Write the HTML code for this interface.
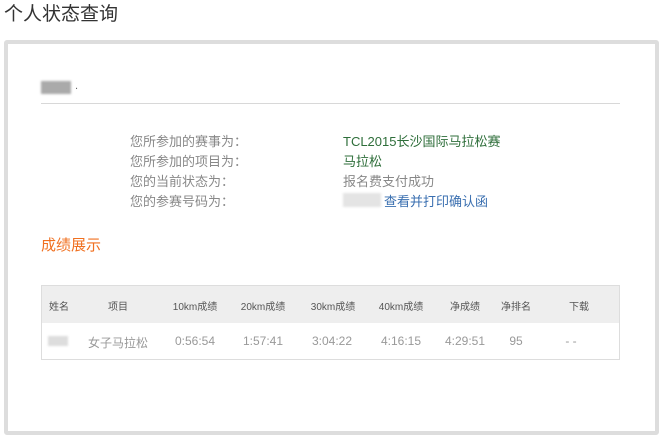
<!DOCTYPE html>
<html><head><meta charset="utf-8"><style>
*{margin:0;padding:0;box-sizing:border-box}
body{width:660px;height:437px;background:#fff;font-family:"Liberation Sans","Noto Sans CJK SC",sans-serif;position:relative;overflow:hidden}
.t{position:absolute;left:4px;top:-1px;font-size:19px;color:#333}
.box{position:absolute;left:4px;top:40px;width:655px;height:395px;border:4px solid #ddd;border-radius:3px;background:#fff}
.abs{position:absolute}
.blur{position:absolute;background:#c8c8c8;filter:blur(1px)}
.hr{position:absolute;left:41px;top:103px;width:579px;height:1px;background:#d8d8d8}
.lab{position:absolute;left:130px;font-size:13px;color:#888}
.val{position:absolute;left:343px;font-size:13px}
.sec{position:absolute;left:41px;top:234px;font-size:15px;color:#f07020}
.tbl{position:absolute;left:41px;top:285px;width:579px;height:75px;border:1px solid #ddd}
.hd{height:37px;background:#eee}
.c{position:absolute;font-size:10px;color:#555;transform:translateX(-50%)}
.d{position:absolute;font-size:12px;color:#999;transform:translateX(-50%)}
</style></head><body>
<div class="t">个人状态查询</div>
<div class="box"></div>
<div class="blur" style="left:41px;top:81px;width:30px;height:13px;background:#aaa"></div>
<div class="abs" style="left:75px;top:80px;font-size:11px;color:#666">.</div>
<div class="hr"></div>
<div class="lab" style="top:131px">您所参加的赛事为：</div>
<div class="lab" style="top:151px">您所参加的项目为：</div>
<div class="lab" style="top:171px">您的当前状态为：</div>
<div class="lab" style="top:191px">您的参赛号码为：</div>
<div class="val" style="top:131px;color:#2e6e3a">TCL2015长沙国际马拉松赛</div>
<div class="val" style="top:151px;color:#2e6e3a">马拉松</div>
<div class="val" style="top:171px;color:#888">报名费支付成功</div>
<div class="blur" style="left:343px;top:193px;width:38px;height:14px;background:#e4e4e4"></div>
<div class="val" style="top:191px;left:384px;color:#3a6fb0">查看并打印确认函</div>
<div class="sec">成绩展示</div>
<div class="tbl"><div class="hd"></div></div>
<div class="c" style="left:59px;top:298px">姓名</div>
<div class="c" style="left:118px;top:298px">项目</div>
<div class="c" style="left:195px;top:298px">10km成绩</div>
<div class="c" style="left:263px;top:298px">20km成绩</div>
<div class="c" style="left:333px;top:298px">30km成绩</div>
<div class="c" style="left:401px;top:298px">40km成绩</div>
<div class="c" style="left:465px;top:298px">净成绩</div>
<div class="c" style="left:516px;top:298px">净排名</div>
<div class="c" style="left:579px;top:298px">下载</div>
<div class="blur" style="left:48px;top:336px;width:20px;height:10px;background:#ddd"></div>
<div class="d" style="left:118px;top:334px">女子马拉松</div>
<div class="d" style="left:195px;top:334px">0:56:54</div>
<div class="d" style="left:263px;top:334px">1:57:41</div>
<div class="d" style="left:332px;top:334px">3:04:22</div>
<div class="d" style="left:401px;top:334px">4:16:15</div>
<div class="d" style="left:465px;top:334px">4:29:51</div>
<div class="d" style="left:516px;top:334px">95</div>
<div class="d" style="left:571px;top:334px">- -</div>
</body></html>
